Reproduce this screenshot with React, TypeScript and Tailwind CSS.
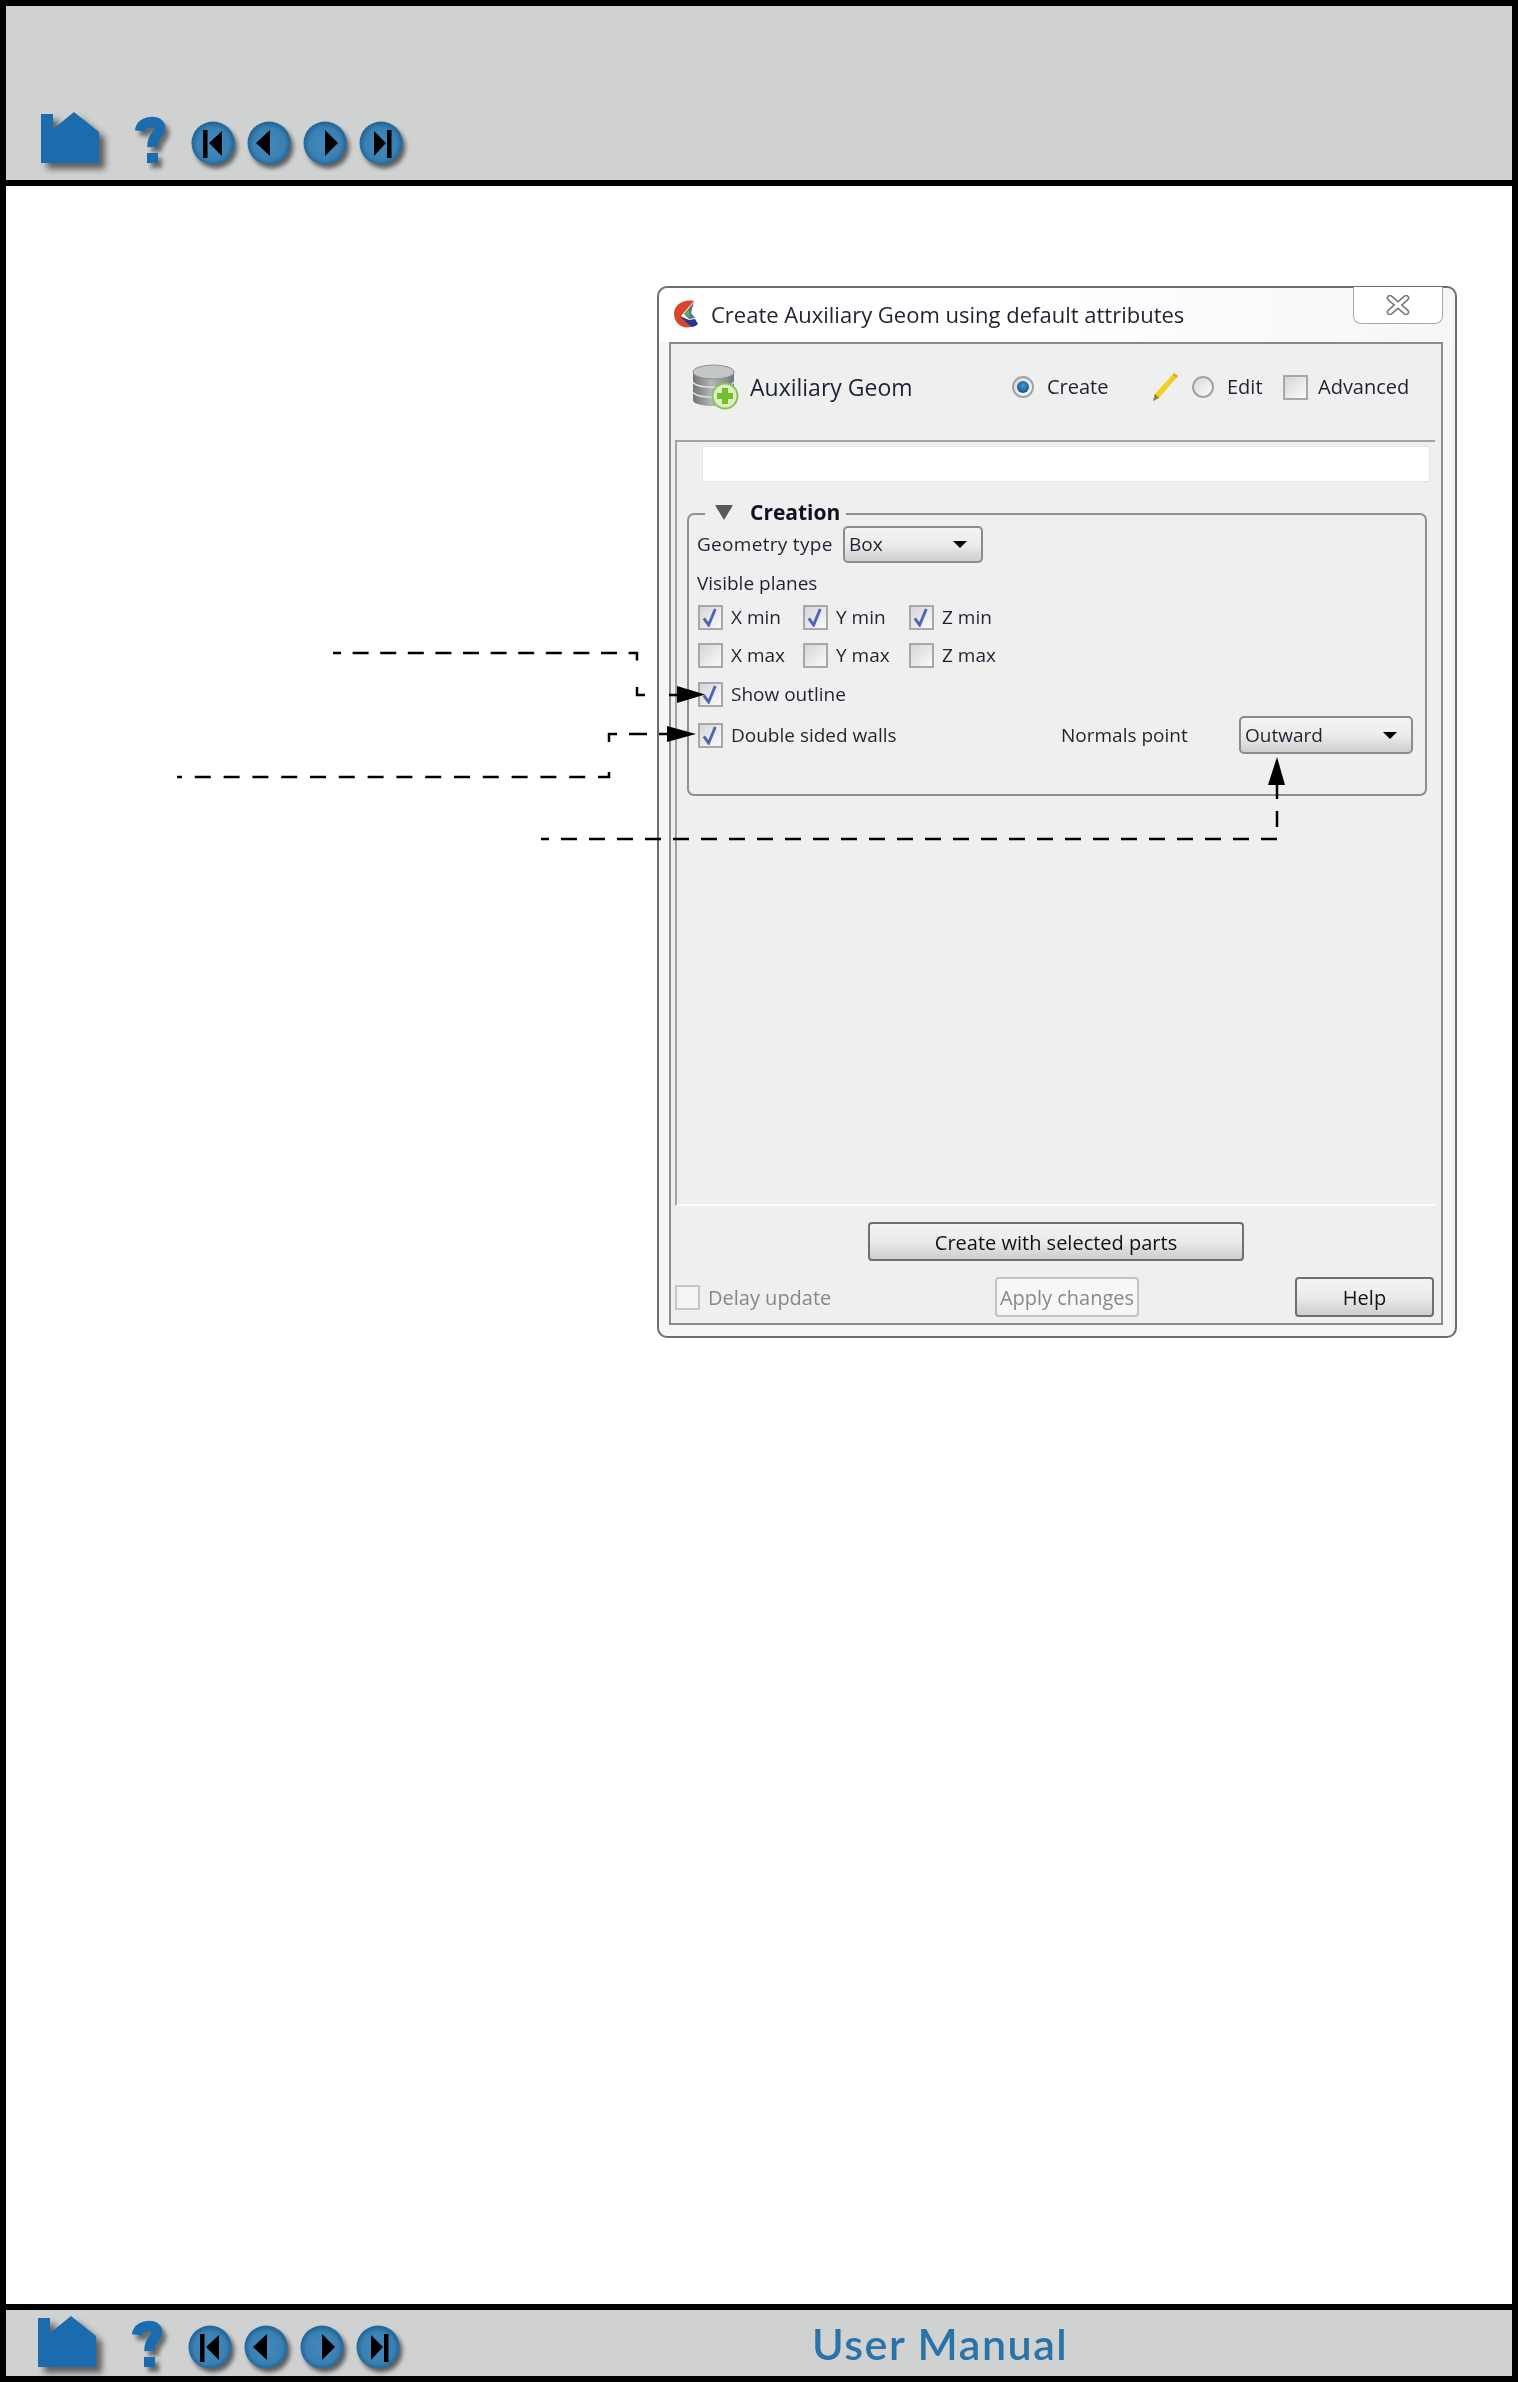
import { useId } from 'react';

const uiFont = "font-['Open_Sans','Noto_Sans',sans-serif]";

function House() {
    return (
        <svg viewBox="0 0 70 60" className="w-[70px] h-[60px] drop-shadow-[6px_6px_3px_rgba(0,0,0,0.55)]">
            <path d="M5 4H17V19L38 2L63 22V53H5Z" fill="#1b6cae" />
        </svg>
    );
}

function Question() {
    return (
        <svg viewBox="0 0 45 60" className="w-[45px] h-[60px] drop-shadow-[4px_5px_2px_rgba(0,0,0,0.5)]">
            <path d="M10 21C11 14 17 12 22 12C28 12 30 15 30 18C30 24 22 25 22.5 37" fill="none" stroke="#1b6cae" strokeWidth="10.5" />
            <rect x="17" y="43" width="11" height="10" fill="#1b6cae" />
        </svg>
    );
}

function Ball({ kind }: { kind: 'first' | 'prev' | 'next' | 'last' }) {
    const id = useId();
    return (
        <svg viewBox="0 0 56 60" className="w-[56px] h-[60px] drop-shadow-[3px_4px_2px_rgba(0,0,0,0.55)]">
            <defs>
                <radialGradient id={id} cx="50%" cy="52%" r="55%">
                    <stop offset="0%" stopColor="#4289bd" />
                    <stop offset="68%" stopColor="#3a80b3" />
                    <stop offset="100%" stopColor="#175a8e" />
                </radialGradient>
            </defs>
            <circle cx="28" cy="33" r="21.5" fill={`url(#${id})`} />
            {kind === 'first' && <path d="M18 20H22.5V48H18ZM24 33L37 21V46Z" fill="#000" />}
            {kind === 'prev' && <path d="M15 33L29 20V46Z" fill="#000" />}
            {kind === 'next' && <path d="M28 20L41 33L28 46Z" fill="#000" />}
            {kind === 'last' && <path d="M21 21L33 33L21 46ZM34 20H38.5V48H34Z" fill="#000" />}
        </svg>
    );
}

function NavIcons() {
    return (
        <div className="flex items-center h-[60px] blur-[0.6px]">
            <House />
            <div className="ml-[24px]"><Question /></div>
            <div className="ml-[10px] flex">
                <Ball kind="first" />
                <Ball kind="prev" />
                <Ball kind="next" />
                <Ball kind="last" />
            </div>
        </div>
    );
}

function AppLogo() {
    return (
        <svg viewBox="0 0 26 30" className="w-[26px] h-[30px] shrink-0">
            <path d="M21 2C10 0 1 6 1 15C1 24 9 30 18 28L8 17Z" fill="#d9472b" />
            <path d="M7 17L18 28C21 28 23 27 25 25L22 20L16 21Z" fill="#24348f" />
            <path d="M21 3L11 15L16 20L22 19L18 14Z" fill="#5f6f7f" />
            <path d="M11 15L16 11L17 19Z" fill="#54b45a" />
        </svg>
    );
}

function DbIcon() {
    return (
        <svg viewBox="0 0 50 46" className="w-[50px] h-[46px] shrink-0">
            <defs>
                <linearGradient id="dbSide" x1="0" x2="1" y1="0" y2="0">
                    <stop offset="0%" stopColor="#6f7375" />
                    <stop offset="45%" stopColor="#b4b7b8" />
                    <stop offset="100%" stopColor="#74787a" />
                </linearGradient>
            </defs>
            <path d="M1 8C1 2 42 2 42 8V36C42 44 1 44 1 36Z" fill="url(#dbSide)" />
            <ellipse cx="21.5" cy="8" rx="20.5" ry="7" fill="#c4c6c7" stroke="#8b8e90" />
            <path d="M1 18C4 25 39 25 42 18" fill="none" stroke="#e0e1e2" strokeWidth="1.5" />
            <path d="M1 28C4 35 39 35 42 28" fill="none" stroke="#e0e1e2" strokeWidth="1.5" />
            <circle cx="33" cy="32" r="12.5" fill="#dcecc4" stroke="#8cc152" strokeWidth="2" />
            <path d="M33 24V40M25 32H41" stroke="#6fc02c" strokeWidth="6" />
        </svg>
    );
}

function Pencil() {
    return (
        <svg viewBox="0 0 26 30" className="w-[26px] h-[30px] shrink-0">
            <path d="M1 29L3 22L22 1L26 4L7 26Z" fill="#f1cf1f" />
            <path d="M22 1L26 4L24.5 6L20.5 3Z" fill="#e8a23a" />
            <path d="M1 29L3 22L7 26Z" fill="#8a8050" />
        </svg>
    );
}

function CloseGlyph() {
    return (
        <svg viewBox="0 0 24 20" className="w-[24px] h-[20px]">
            <path d="M4 3L20 17M20 3L4 17" stroke="#73777b" strokeWidth="6.5" strokeLinecap="round" />
            <path d="M4 3L20 17M20 3L4 17" stroke="#fff" strokeWidth="3.5" strokeLinecap="round" />
        </svg>
    );
}

function Radio({ on }: { on?: boolean }) {
    return (
        <span className="w-[22px] h-[22px] shrink-0 rounded-full border-2 border-[#a2a2a2] bg-gradient-to-br from-[#d8d8d8] to-[#fbfbfb] flex items-center justify-center">
            {on && <span className="w-[12px] h-[12px] rounded-full bg-[radial-gradient(circle_at_50%_40%,#3f9bd6,#0b3c6b)]" />}
        </span>
    );
}

function Check({ on, dim }: { on?: boolean; dim?: boolean }) {
    return (
        <span className={`w-[25px] h-[25px] shrink-0 border-2 ${dim ? 'border-[#c6c6c6] bg-[#f4f4f4]' : 'border-[#a8a8a8] bg-gradient-to-br from-[#d6d6da] to-[#fafafa]'} flex items-center justify-center`}>
            {on && (
                <svg viewBox="0 0 20 20" className="w-[19px] h-[19px]">
                    <path d="M3 11L8 18L15 1" fill="none" stroke="#5064ae" strokeWidth="3" />
                </svg>
            )}
        </span>
    );
}

function CheckItem({ label, on, className }: { label: string; on?: boolean; className?: string }) {
    return (
        <div className={`flex items-center ${className ?? ''}`}>
            <Check on={on} />
            <span className="ml-[8px]">{label}</span>
        </div>
    );
}

function Combo({ label, className }: { label: string; className: string }) {
    return (
        <div className={`${className} shrink-0 border-2 border-[#8c8c8c] rounded-[5px] bg-gradient-to-b from-[#f3f3f3] via-[#ececec] to-[#cfcfcf] flex items-center justify-between pl-[4px] pr-[14px]`}>
            <span>{label}</span>
            <span className="w-0 h-0 border-l-[7px] border-r-[7px] border-t-[7px] border-l-transparent border-r-transparent border-t-black" />
        </div>
    );
}

function PushButton({ label, className }: { label: string; className: string }) {
    return (
        <div className={`${className} shrink-0 border-2 border-[#6f6f6f] rounded-[4px] bg-gradient-to-b from-[#f3f3f3] via-[#ebebeb] to-[#cdcdcd] flex items-center justify-center pt-[2px] text-[20px] text-[#111]`}>
            {label}
        </div>
    );
}

function Callouts() {
    return (
        <svg viewBox="0 0 1518 2382" className="absolute left-0 top-0 w-[1518px] h-[2382px] pointer-events-none">
            <g fill="none" stroke="#000" strokeWidth="2.5">
                <path d="M333 653H637V661" strokeDasharray="16 11.6" strokeDashoffset="8" />
                <path d="M637 687V695H645" />
                <path d="M669 695H684" />
                <path d="M177 777H609V769" strokeDasharray="16 12.8" strokeDashoffset="11" />
                <path d="M609 742V734H617" />
                <path d="M629 734H647M659 734H675" />
                <path d="M541 839H1277V785" strokeDasharray="16 12" strokeDashoffset="8" />
            </g>
            <path d="M677 686L705 694.5L677 703Z" fill="#000" />
            <path d="M667 726L696 734L667 742Z" fill="#000" />
            <path d="M1277 757L1285 785H1268Z" fill="#000" />
        </svg>
    );
}

function Dialog() {
    return (
        <div className={`ml-[651px] mt-[100px] w-[800px] h-[1052px] relative rounded-[10px] border-2 border-[#6d6d6d] bg-[#f6f6f6] flex flex-col blur-[0.4px] text-[#1e2330] text-[19px] leading-none ${uiFont}`}>
            <div className="h-[54px] flex items-center pl-[14px] pb-[2px] rounded-t-[10px] bg-gradient-to-r from-white via-white to-[#f6f6f6]">
                <AppLogo />
                <span className="ml-[12px] text-[22px]">Create Auxiliary Geom using default attributes</span>
            </div>
            <div className="absolute right-[12px] -top-[1px] w-[90px] h-[37px] border border-t-0 border-[#a9a9a9] rounded-b-[8px] bg-white flex items-center justify-center">
                <CloseGlyph />
            </div>

            <div className="flex-1 ml-[10px] mr-[12px] mb-[11px] border-2 border-[#8b8b8b] bg-[#efefef] flex flex-col">
                <div className="h-[96px] shrink-0 flex items-center pl-[21px] pb-[10px] text-[20px]">
                    <DbIcon />
                    <span className="ml-[8px] w-[262px] text-[23px] text-[#1b2233]">Auxiliary Geom</span>
                    <Radio on />
                    <span className="ml-[13px] w-[105px]">Create</span>
                    <Pencil />
                    <div className="ml-[14px]"><Radio /></div>
                    <span className="ml-[13px] w-[56px]">Edit</span>
                    <Check />
                    <span className="ml-[10px]">Advanced</span>
                </div>

                <div className="ml-[4px] w-[760px] h-[766px] shrink-0 border-t-2 border-l-2 border-b-2 border-t-[#a3a3a3] border-l-[#a3a3a3] border-b-[#fbfbfb]">
                    <div className="ml-[25px] mt-[4px] w-[728px] h-[36px] rounded-[3px] border border-[#dde6f0] bg-white" />
                    <div className="ml-[10px] mt-[31px] w-[740px] h-[283px] rounded-[7px] border-2 border-[#8f8f8f]">
                        <div className="-mt-[12px] ml-[16px] w-[141px] h-[19px] bg-[#efefef] flex items-center">
                            <span className="ml-[10px] w-0 h-0 border-l-[9px] border-r-[9px] border-t-[15px] border-l-transparent border-r-transparent border-t-[#55585c]" />
                            <span className="ml-[17px] font-bold text-[21px] text-[#0d1220]">Creation</span>
                        </div>
                        <div className="mt-[4px] pl-[8px] h-[37px] flex items-center">
                            <span className="w-[146px] tracking-[0.3px]">Geometry type</span>
                            <Combo label="Box" className="w-[140px] h-[37px]" />
                        </div>
                        <div className="pl-[8px] h-[40px] flex items-center">Visible planes</div>
                        <div className="mt-[2px] pl-[9px] h-[24px] flex items-center">
                            <CheckItem label="X min" on className="w-[105px]" />
                            <CheckItem label="Y min" on className="w-[106px]" />
                            <CheckItem label="Z min" on />
                        </div>
                        <div className="mt-[14px] pl-[9px] h-[25px] flex items-center">
                            <CheckItem label="X max" className="w-[105px]" />
                            <CheckItem label="Y max" className="w-[106px]" />
                            <CheckItem label="Z max" />
                        </div>
                        <div className="mt-[14px] pl-[9px] h-[24px] flex items-center">
                            <CheckItem label="Show outline" on />
                        </div>
                        <div className="mt-[10px] pl-[9px] h-[38px] flex items-center">
                            <CheckItem label="Double sided walls" on className="w-[363px]" />
                            <span className="w-[178px]">Normals point</span>
                            <Combo label="Outward" className="w-[174px] h-[38px]" />
                        </div>
                    </div>
                </div>

                <PushButton label="Create with selected parts" className="ml-[197px] mt-[16px] w-[376px] h-[39px]" />
                <div className="mt-[16px] h-[40px] flex items-center">
                    <div className="ml-[4px]"><Check dim /></div>
                    <span className="ml-[8px] w-[287px] pt-[2px] text-[20px] text-[#85888c]">Delay update</span>
                    <div className="w-[144px] h-[40px] shrink-0 border-2 border-[#c3c3c3] rounded-[4px] bg-[#f7f7f7] flex items-center justify-center pt-[2px] text-[20px] text-[#85888c]">
                        Apply changes
                    </div>
                    <PushButton label="Help" className="ml-[156px] w-[139px] h-[40px]" />
                </div>
            </div>
        </div>
    );
}

export default function App() {
    return (
        <div className="relative w-[1518px] h-[2382px] border-[6px] border-black bg-white flex flex-col">
            <header className="h-[180px] shrink-0 border-b-[6px] border-black bg-[#d0d2d1] flex items-end pb-[10px] pl-[30px]">
                <NavIcons />
            </header>
            <main className="flex-1">
                <Dialog />
            </main>
            <footer className="h-[72px] shrink-0 border-t-[6px] border-black bg-[#d0d2d1] flex items-start pt-[4px] pl-[27px]">
                <NavIcons />
                <span className="ml-[406px] mt-[8px] text-[43px] leading-none tracking-[1.5px] font-semibold blur-[0.5px] text-[#2a72a8] font-['Lato',sans-serif]">User Manual</span>
            </footer>
            <div className="absolute -left-[6px] -top-[6px]">
                <Callouts />
            </div>
        </div>
    );
}
